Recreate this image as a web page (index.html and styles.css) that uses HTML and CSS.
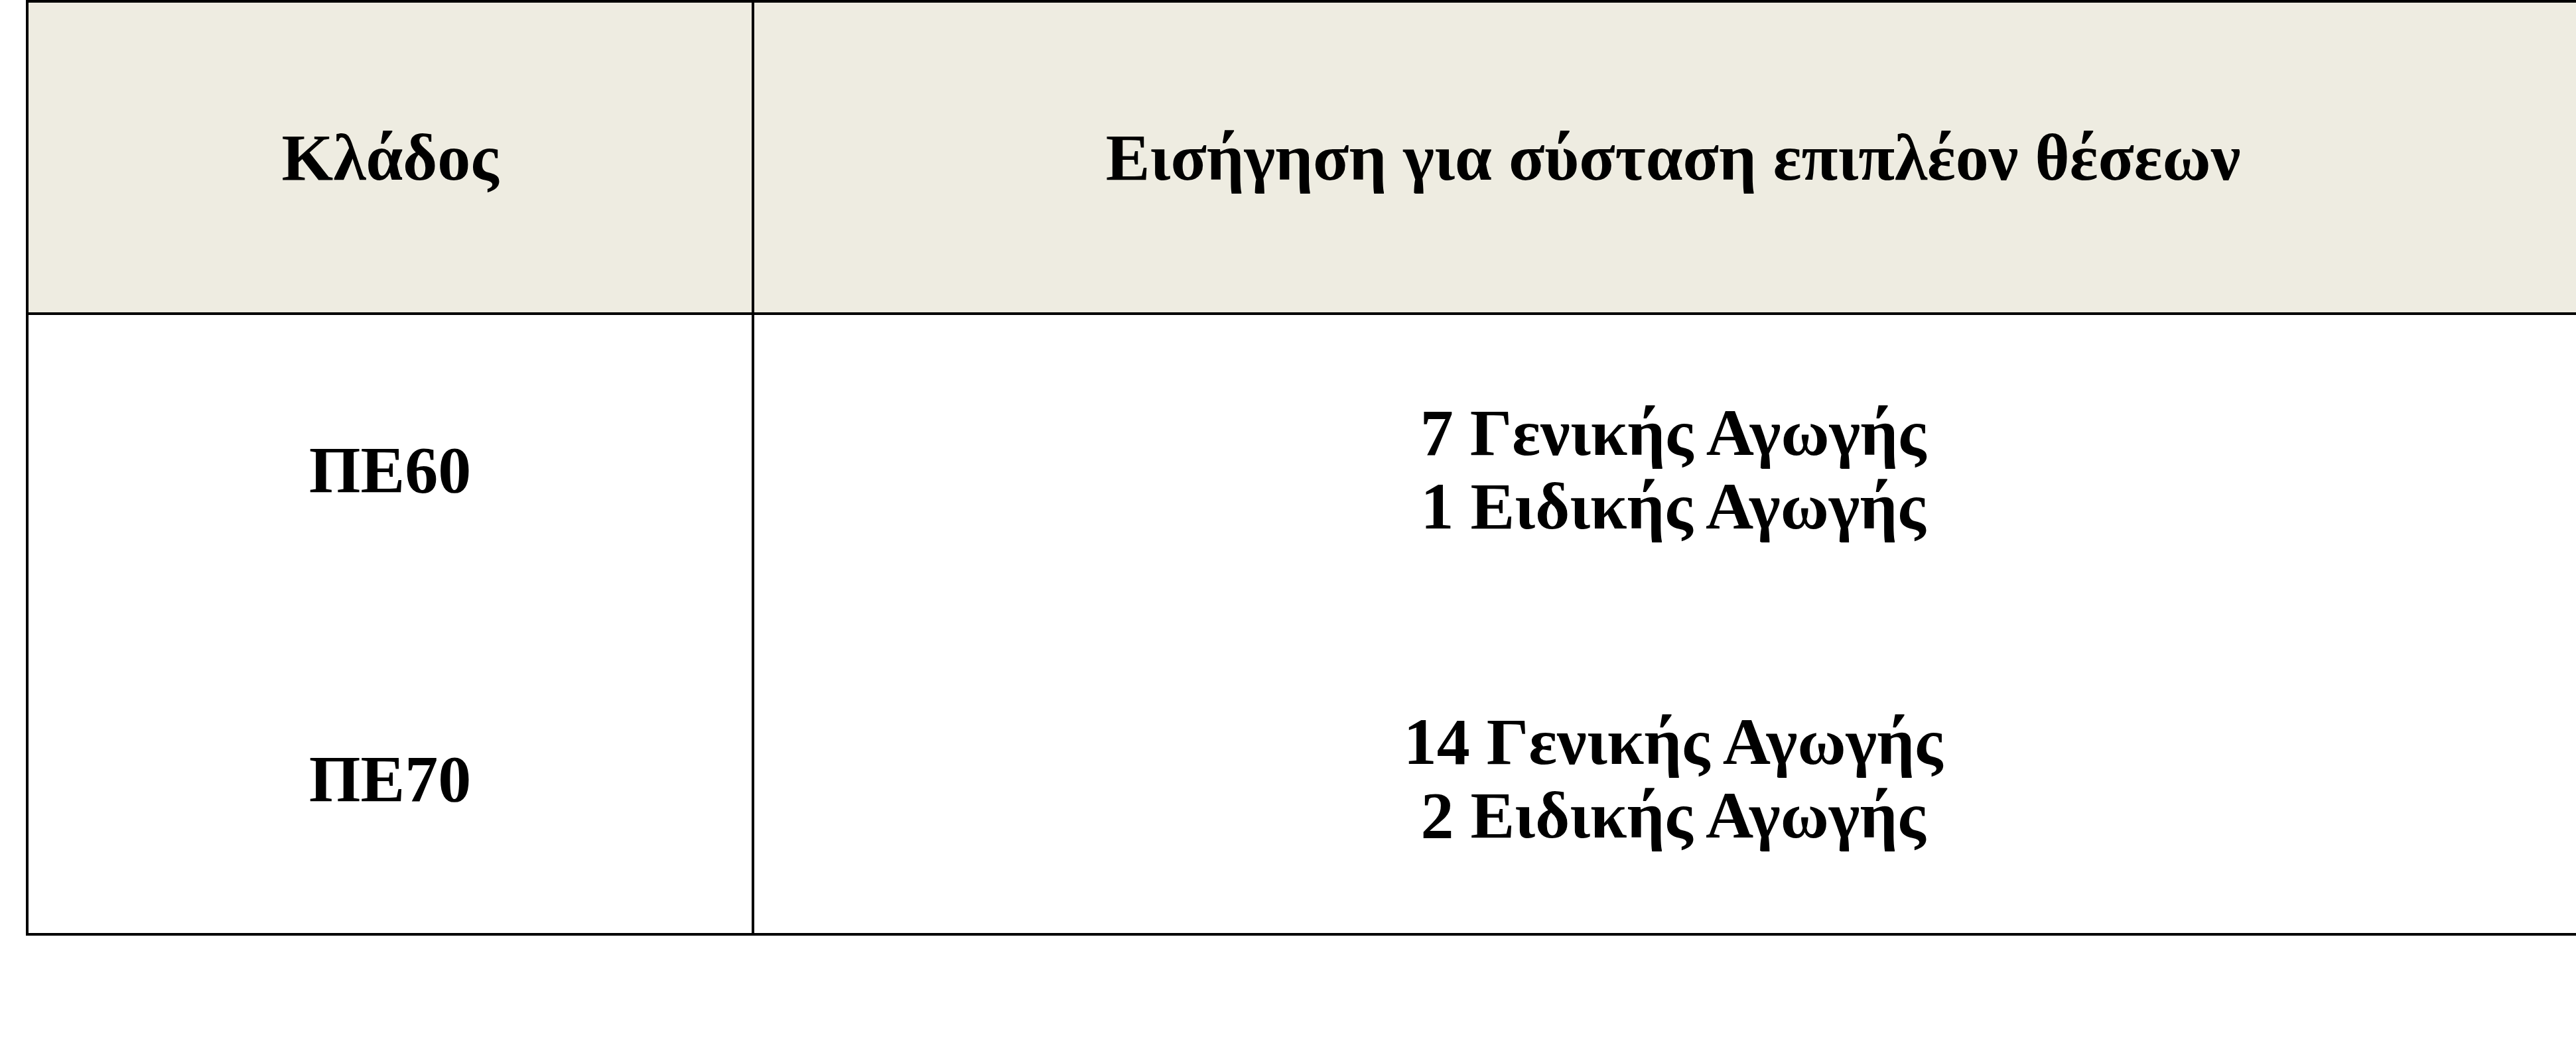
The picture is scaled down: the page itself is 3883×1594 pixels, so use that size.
FILE: index.html
```html
<!DOCTYPE html>
<html lang="el">
<head>
<meta charset="utf-8">
<title>Κλάδος</title>
<link rel="stylesheet" href="styles.css">
</head>
<body>
<div class="sheet">
  <div class="grid">
    <div class="cell head col1">Κλάδος</div>
    <div class="cell head col2">Εισήγηση για σύσταση επιπλέον θέσεων</div>
    <div class="cell col1">ΠΕ60</div>
    <div class="cell col2"><div>7 Γενικής Αγωγής</div><div>1 Ειδικής Αγωγής</div></div>
    <div class="cell col1 last">ΠΕ70</div>
    <div class="cell col2 last"><div>14 Γενικής Αγωγής</div><div>2 Ειδικής Αγωγής</div></div>
  </div>
</div>
</body>
</html>
```
FILE: styles.css
```css
html, body {
  margin: 0;
  padding: 0;
  background: #ffffff;
  overflow: hidden;
}

.sheet {
  padding-left: 39px;
  width: 4000px;
}

.grid {
  display: grid;
  grid-template-columns: 1094px 2774px;
  grid-template-rows: 471px 466px 470px;
  width: max-content;
  border-top: 4px solid #000;
  border-left: 4px solid #000;
  font-family: "Liberation Serif", "Times New Roman", serif;
  font-weight: bold;
  font-size: 100px;
  line-height: 111px;
  color: #000;
}

.cell {
  display: flex;
  flex-direction: column;
  align-items: center;
  justify-content: center;
  text-align: center;
  border-right: 4px solid #000;
}

.head {
  background: #eeece1;
  border-bottom: 4px solid #000;
}

.last {
  border-bottom: 4px solid #000;
}
```
